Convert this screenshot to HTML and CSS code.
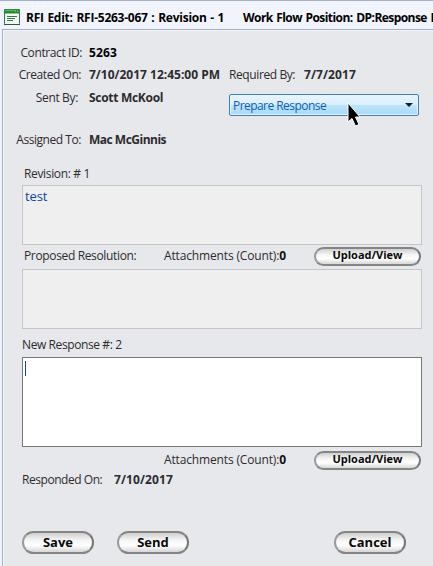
FILE: index.html
```html
<!DOCTYPE html>
<html lang="en">
<head>
<meta charset="utf-8">
<title>RFI Edit</title>
<link rel="stylesheet" href="styles.css">
</head>
<body>
<div class="window">
  <header class="titlebar">
    <svg class="app-icon" width="16" height="16" viewBox="0 0 16 16">
      <rect x=".5" y=".5" width="15" height="15" rx="1" fill="#f4faf1" stroke="#397052"/>
      <rect x="0" y="0" width="16" height="4.5" rx="1" fill="#278b35"/>
      <path d="M1 1.5h10" stroke="#66b565"/>
      <path d="M11 2h1M13 2h1" stroke="#b9e6ad"/>
      <path d="M3 7.5h10M3 9.5h8M3 11.5h6" stroke="#387a50"/>
      <path d="M0 15.5h16" stroke="#285848"/>
    </svg>
    <span class="title">RFI Edit: RFI-5263-067 : Revision - 1</span>
    <span class="position">Work Flow Position: DP:Response Draft</span>
  </header>
  <main class="panel">
    <div class="row"><span class="label contract">Contract ID:</span><b class="value id">5263</b></div>
    <div class="row"><span class="label created">Created On:</span><b class="value date">7/10/2017 12:45:00 PM</b><span class="required">Required By:</span><b class="due">7/7/2017</b></div>
    <div class="row sent-row"><span class="label sent">Sent By:</span><b class="value sender">Scott McKool</b>
      <div class="select"><span>Prepare Response</span><i class="arrow"></i>
        <svg class="cursor" width="14" height="25" viewBox="0 0 14 25"><path d="M1 1v19l4-3.5 3.5 7.5 3.5-1.5L8.500 15H13z" fill="#000" stroke="#fff" stroke-width="1"/></svg>
      </div>
    </div>
    <div class="row assigned-row"><span class="label assigned">Assigned To:</span><b class="value assignee">Mac McGinnis</b></div>
    <div class="section revision">Revision: # 1</div>
    <div class="box">test</div>
    <div class="attach-row"><span class="proposed">Proposed Resolution:</span><span class="attachments">Attachments (Count):<b>0</b></span><button class="upload">Upload/View</button></div>
    <div class="box"></div>
    <div class="section response">New Response #: 2</div>
    <div class="box editor"><i class="caret"></i></div>
    <div class="attach-row lower"><span class="proposed"></span><span class="attachments">Attachments (Count):<b>0</b></span><button class="upload">Upload/View</button></div>
    <div class="responded"><span>Responded On:</span><b>7/10/2017</b></div>
    <div class="actions"><button>Save</button><button>Send</button><button class="cancel">Cancel</button></div>
  </main>
</div>
</body>
</html>
```
FILE: styles.css
```css
* { box-sizing: border-box; }
body { margin: 0; overflow: hidden; font: 12px "Open Sans", "Noto Sans", sans-serif; color: #2d2b2d; letter-spacing: -.35px; }
b { font-weight: 700; }
.window { width: 433px; height: 566px; background: #f1f4fc; border-top: 1px solid #a3b1c9; overflow: hidden; white-space: nowrap; }
.titlebar { height: 28px; padding: 5px 0 0 4px; display: flex; align-items: center; font-weight: 700; color: #000; }
.app-icon { flex: none; margin: -1px 6px 0 0; }
.title { width: 217px; flex: none; letter-spacing: -.25px; word-spacing: .8px; }
.position { letter-spacing: -.56px; word-spacing: 1px; }
.panel { margin-left: 2px; height: 537px; border: 1px solid #a0aec8; border-right: 0; border-bottom: 0; box-shadow: inset 1px 1px #f5f7fb; background: #e7e8ec; padding-top: 12px; }
.row { display: flex; height: 22px; line-height: 22px; }
.label { width: 79px; flex: none; text-align: right; }
.created, .assigned { padding-right: 1px; }
.contract { letter-spacing: -.4px; }
.created, .assigned { letter-spacing: -.45px; }
.sent { padding-right: 4px; }
.value { margin-left: 7px; width: 140px; flex: none; }
.id { color: #000; letter-spacing: .1px; }
.date { letter-spacing: 0; }
.due { letter-spacing: .1px; }
.sender { letter-spacing: -.3px; }
.assignee { letter-spacing: -.5px; }
.required { width: 75px; flex: none; letter-spacing: -.4px; }
.sent-row { height: 43px; line-height: 24px; }
.select { position: relative; width: 190px; height: 22px; margin-top: 8px; border: 1px solid #3c7fb1; border-radius: 2px; box-shadow: inset 0 0 0 1px #e5f6fe; background: linear-gradient(#e8f5fc 0 0, #d9effb 49%, #bde6fb 50%, #a7d9f5); color: #1259be; line-height: 22px; padding-left: 3px; letter-spacing: -.55px; }
.arrow { position: absolute; right: 5px; top: 8px; border: 4px solid transparent; border-top-color: #17202a; border-bottom: 0; }
.cursor { position: absolute; left: 117px; top: 7px; }
.assigned-row { line-height: 22px; height: 33px; }
.section { height: 23px; line-height: 23px; }
.revision { padding-left: 21px; }
.box { width: 400px; height: 60px; margin-left: 19px; border: 1px solid #c6c6c8; background: #efefef; padding: 1px 2px; line-height: 18px; font-size: 13px; color: #0b479d; letter-spacing: -.1px; }
.attach-row { height: 24px; line-height: 22px; display: flex; padding-left: 21px; }
.proposed { width: 140px; flex: none; }
.attachments { width: 150px; flex: none; letter-spacing: -.15px; }
.attachments b { color: #111; }
button { font: 700 11px/15px "Open Sans", sans-serif; letter-spacing: 0; color: #080808; padding: 0 0 2px; border: 2px solid #858585; border-left-color: #9b9b9b; border-right-color: #777; border-radius: 10px; background: linear-gradient(#d0d0d0, #f5f5f5 38%, #fff 65%, #d6d6d6); }
.upload { width: 107px; height: 19px; margin-top: 2px; line-height: 12px; padding-bottom: 3px; }
.response { height: 28px; line-height: 31px; padding-left: 19px; letter-spacing: -.4px; }
.editor { height: 90px; border-color: #777; background: #fff; padding: 3px 2px; }
.caret { display: block; width: 1px; height: 15px; background: #194a76; }
.lower { height: 23px; line-height: 26px; }
.lower .upload { margin-top: 4px; }
.responded { display: flex; height: 61px; line-height: 20px; padding-left: 19px; }
.responded span { width: 92px; letter-spacing: -.45px; }
.responded b { letter-spacing: .1px; }
.actions { display: flex; gap: 23px; padding-left: 19px; }
.actions button { width: 72px; height: 23px; border-radius: 12px; font-size: 13px; line-height: 18px; padding-bottom: 1px; }
.actions .cancel { margin-left: 122px; }
```
